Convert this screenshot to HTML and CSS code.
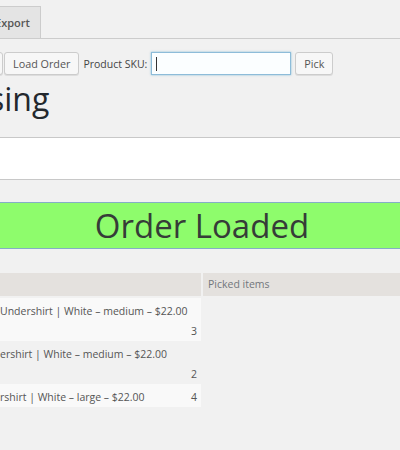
FILE: index.html
```html
<!DOCTYPE html>
<html lang="en">
<head>
    <meta charset="UTF-8">
    <meta name="viewport" content="width=device-width, initial-scale=1.0">
    <title>Order Picking</title>
    <link rel="stylesheet" href="styles.css">
</head>
<body>
    <div class="tabs">
        <a class="tab">Export</a>
    </div>

    <div class="toolbar">
        <button class="btn btn-cut">Scan</button>
        <button class="btn">Load Order</button>
        <label class="sku-label">Product SKU:</label>
        <div class="sku-input"><span class="caret"></span></div>
        <button class="btn">Pick</button>
    </div>

    <h1 class="title">sing</h1>

    <div class="scan-box"></div>

    <div class="status">Order Loaded</div>

    <div class="lists">
        <div class="order-list">
            <div class="list-head"></div>
            <div class="item stacked">
                <span class="name">Undershirt | White – medium – $22.00</span>
                <span class="qty">3</span>
            </div>
            <div class="item stacked">
                <span class="name">ershirt | White – medium – $22.00</span>
                <span class="qty">2</span>
            </div>
            <div class="item">
                <span class="name">rshirt | White – large – $22.00</span>
                <span class="qty">4</span>
            </div>
        </div>
        <div class="picked-list">
            <div class="list-head">Picked items</div>
        </div>
    </div>
</body>
</html>
```

FILE: styles.css
```css
body {
    margin: 0;
    font-family: "Open Sans", "DejaVu Sans", sans-serif;
    background-color: #f1f1f1;
    color: #444;
    overflow: hidden;
}
.tabs {
    height: 38px;
    border-bottom: 1px solid #ccc;
    display: flex;
    align-items: flex-end;
}
.tab {
    height: 31px;
    line-height: 32px;
    margin-left: -16px;
    padding: 0 10px;
    background-color: #e4e4e4;
    border: 1px solid #ccc;
    border-bottom: none;
    font-size: 11px;
    font-weight: 600;
    color: #555;
}
.toolbar {
    display: flex;
    align-items: center;
    gap: 4px;
    margin-top: 13px;
    height: 23px;
}
.btn {
    height: 23px;
    padding: 0 8px;
    background-color: #f7f7f7;
    border: 1px solid #ccc;
    border-radius: 3px;
    box-shadow: 0 1px 0 #ddd;
    font-family: inherit;
    font-size: 10.8px;
    color: #555;
}
.btn-cut {
    width: 40px;
    margin-left: -37px;
    margin-right: -3px;
}
.sku-label {
    font-size: 10.5px;
    color: #444;
}
.sku-input {
    width: 140px;
    height: 23px;
    box-sizing: border-box;
    border: 1px solid #8dbcd9;
    box-shadow: 0 0 2px rgba(30, 140, 190, 0.5);
    background-color: #fbfeff;
    display: flex;
    align-items: center;
    padding-left: 4px;
}
.caret {
    width: 1px;
    height: 14px;
    background-color: #333;
}
.title {
    margin: 5px 0 0 -11px;
    font-size: 32px;
    font-weight: 400;
    line-height: 38px;
    color: #23282d;
}
.scan-box {
    margin-top: 19px;
    height: 41px;
    background-color: #fff;
    border-top: 1px solid #c8c8c8;
    border-bottom: 1px solid #c8c8c8;
}
.status {
    margin-top: 22px;
    height: 45px;
    line-height: 46px;
    padding-left: 4px;
    background-color: #8efc6c;
    border-top: 1px solid #84aec6;
    border-bottom: 1px solid #84aec6;
    text-align: center;
    font-size: 33px;
    font-weight: 500;
    color: #363c38;
}
.lists {
    display: flex;
    gap: 2px;
    margin-top: 24px;
}
.order-list {
    width: 201px;
}
.picked-list {
    flex: 1;
}
.list-head {
    height: 23px;
    line-height: 23px;
    padding-left: 5px;
    background-color: #e4e1de;
    font-size: 10.5px;
    color: #72777c;
}
.order-list .list-head {
    margin-bottom: 2px;
}
.item {
    display: flex;
    justify-content: space-between;
    padding: 3px 4px 0 0;
    font-size: 10.5px;
    line-height: 20px;
    color: #555;
}
.item:nth-child(even) {
    background-color: #f9f9f9;
}
.item.stacked {
    flex-direction: column;
}
.item.stacked .qty {
    text-align: right;
}
.item:last-child {
    padding: 3px 4px 0 0;
}
```
